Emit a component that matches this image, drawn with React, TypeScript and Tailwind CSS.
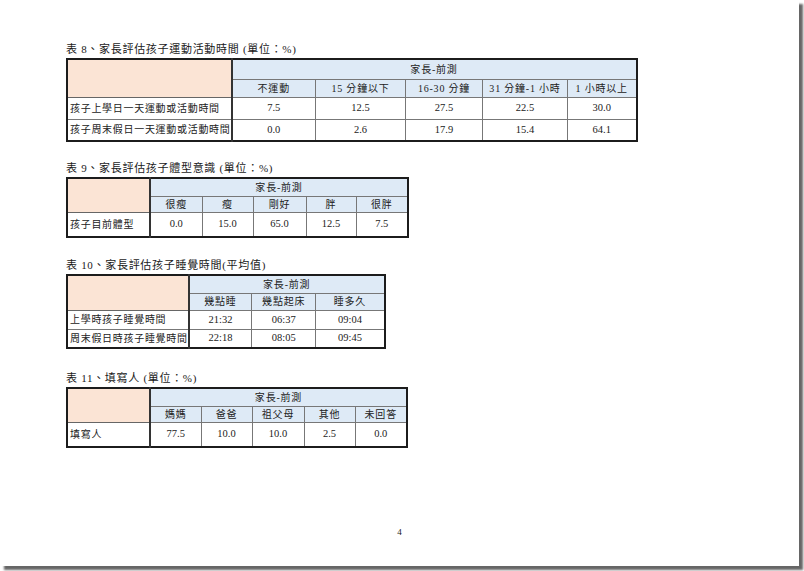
import React from 'react'

type TableProps = {
  title: string
  firstW: string
  cols: { label: string; w: string }[]
  rows: { label: string; values: string[] }[]
  h: [string, string, string]
  gap: string
}

function ReportTable({ title, firstW, cols, rows, h, gap }: TableProps) {
  return (
    <div className={gap}>
      <div className="h-[17px] leading-[17px] text-[11px] tracking-[0.7px] text-[#1a1a1a]">{title}</div>
      <table className="border-collapse table-fixed border-2 border-[#1c1c1c] text-[10px] text-[#222]">
        <colgroup>
          <col className={firstW} />
          {cols.map((c, i) => (
            <col key={i} className={c.w} />
          ))}
        </colgroup>
        <tbody>
          <tr className={h[0]}>
            <td rowSpan={2} className="bg-[#fbe4d5] border-r-2 border-b border-r-[#333] border-b-[#666]" />
            <td colSpan={cols.length} className="bg-[#deeaf6] border border-[#777] text-center tracking-[0.8px] p-0">
              家長-前測
            </td>
          </tr>
          <tr className={h[1]}>
            {cols.map((c, i) => (
              <td key={i} className="bg-[#deeaf6] border border-[#777] text-center tracking-[0.8px] p-0 whitespace-nowrap">
                {c.label}
              </td>
            ))}
          </tr>
          {rows.map((r, ri) => (
            <tr key={ri} className={h[2]}>
              <td className="border border-[#777] border-r-2 border-r-[#333] pl-[2px] tracking-[0.7px] whitespace-nowrap">
                {r.label}
              </td>
              {r.values.map((v, vi) => (
                <td key={vi} className="border border-[#777] text-center text-[10.5px] p-0">
                  {v}
                </td>
              ))}
            </tr>
          ))}
        </tbody>
      </table>
    </div>
  )
}

export default function App() {
  return (
    <div className="w-[804px] h-[571px] bg-white font-['Liberation_Serif','Noto_Sans_CJK_TC',serif]">
      <div className="relative w-[799px] h-[566px] bg-white shadow-[4px_4px_2px_rgba(0,0,0,0.6)] pl-[66px] pt-[24px] flex flex-col">
        <ReportTable
          title="表 8、家長評估孩子運動活動時間 (單位：%)"
          firstW="w-[160px]"
          cols={[
            { label: '不運動', w: 'w-[84px]' },
            { label: '15 分鐘以下', w: 'w-[90px]' },
            { label: '16-30 分鐘', w: 'w-[77px]' },
            { label: '31 分鐘-1 小時', w: 'w-[85px]' },
            { label: '1 小時以上', w: 'w-[69px]' },
          ]}
          rows={[
            { label: '孩子上學日一天運動或活動時間', values: ['7.5', '12.5', '27.5', '22.5', '30.0'] },
            { label: '孩子周末假日一天運動或活動時間', values: ['0.0', '2.6', '17.9', '15.4', '64.1'] },
          ]}
          h={['h-[20px]', 'h-[18px]', 'h-[22px]']}
          gap="mt-[17px]"
        />
        <ReportTable
          title="表 9、家長評估孩子體型意識 (單位：%)"
          firstW="w-[83px]"
          cols={[
            { label: '很瘦', w: 'w-[52px]' },
            { label: '瘦', w: 'w-[51px]' },
            { label: '剛好', w: 'w-[53px]' },
            { label: '胖', w: 'w-[50px]' },
            { label: '很胖', w: 'w-[52px]' },
          ]}
          rows={[{ label: '孩子目前體型', values: ['0.0', '15.0', '65.0', '12.5', '7.5'] }]}
          h={['h-[18px]', 'h-[16px]', 'h-[25px]']}
          gap="mt-[18px]"
        />
        <ReportTable
          title="表 10、家長評估孩子睡覺時間(平均值)"
          firstW="w-[121px]"
          cols={[
            { label: '幾點睡', w: 'w-[63px]' },
            { label: '幾點起床', w: 'w-[64px]' },
            { label: '睡多久', w: 'w-[69px]' },
          ]}
          rows={[
            { label: '上學時孩子睡覺時間', values: ['21:32', '06:37', '09:04'] },
            { label: '周末假日時孩子睡覺時間', values: ['22:18', '08:05', '09:45'] },
          ]}
          h={['h-[18px]', 'h-[17px]', 'h-[19px]']}
          gap="mt-[19px]"
        />
        <ReportTable
          title="表 11、填寫人 (單位：%)"
          firstW="w-[83px]"
          cols={[
            { label: '媽媽', w: 'w-[51px]' },
            { label: '爸爸', w: 'w-[51px]' },
            { label: '祖父母', w: 'w-[52px]' },
            { label: '其他', w: 'w-[51px]' },
            { label: '未回答', w: 'w-[52px]' },
          ]}
          rows={[{ label: '填寫人', values: ['77.5', '10.0', '10.0', '2.5', '0.0'] }]}
          h={['h-[18px]', 'h-[16px]', 'h-[25px]']}
          gap="mt-[21px]"
        />
        <div className="absolute left-0 right-0 top-[526px] text-center text-[9px] text-[#222]">4</div>
      </div>
    </div>
  )
}
